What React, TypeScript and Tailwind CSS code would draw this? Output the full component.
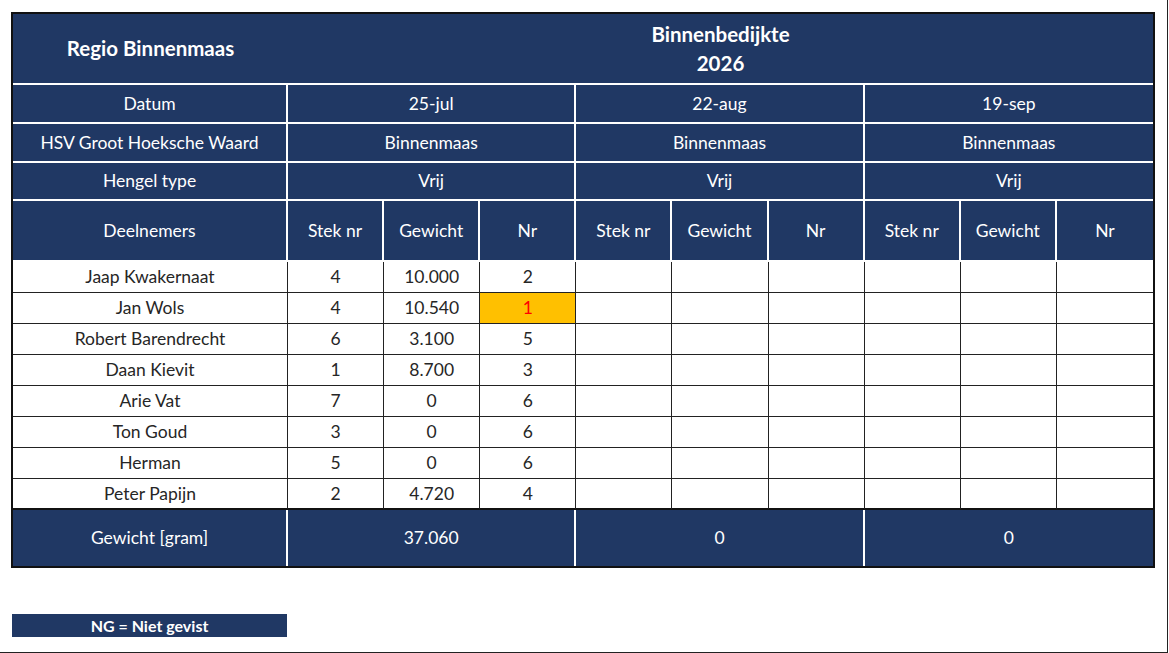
import React from 'react';

const NAVY = 'bg-[#203864]';

interface Row {
  name: string;
  stek: string;
  gewicht: string;
  nr: string;
  winner?: boolean;
}

const rows: Row[] = [
  { name: 'Jaap Kwakernaat', stek: '4', gewicht: '10.000', nr: '2' },
  { name: 'Jan Wols', stek: '4', gewicht: '10.540', nr: '1', winner: true },
  { name: 'Robert Barendrecht', stek: '6', gewicht: '3.100', nr: '5' },
  { name: 'Daan Kievit', stek: '1', gewicht: '8.700', nr: '3' },
  { name: 'Arie Vat', stek: '7', gewicht: '0', nr: '6' },
  { name: 'Ton Goud', stek: '3', gewicht: '0', nr: '6' },
  { name: 'Herman', stek: '5', gewicht: '0', nr: '6' },
  { name: 'Peter Papijn', stek: '2', gewicht: '4.720', nr: '4' },
];

const dates = ['25-jul', '22-aug', '19-sep'];
const totals = ['37.060', '0', '0'];

// header cell: navy with white grid lines
const hd = `${NAVY} text-white text-center align-middle border-b-2 border-white`;

export default function App() {
  return (
    <div
      className="relative w-[1168px] h-[653px] bg-white border-r border-b border-[#222]"
      style={{ fontFamily: 'Lato, "Open Sans", sans-serif' }}
    >
      <div className="pt-3 pl-[11px]">
        <div className="w-[1144px] border-2 border-[#111]">
          <table className="w-full table-fixed border-separate border-spacing-0 text-[17.5px] leading-tight">
            <colgroup>
              <col className="w-[275px]" />
              {Array.from({ length: 9 }, (_, i) => (
                <col key={i} />
              ))}
            </colgroup>
            <tbody>
              {/* Title */}
              <tr>
                <td className={`${hd} h-[71px] text-[20.5px] font-bold`}>Regio Binnenmaas</td>
                <td colSpan={9} className={`${hd} h-[71px] text-[20.5px] font-bold leading-[29px]`}>
                  Binnenbedijkte
                  <br />
                  2026
                </td>
              </tr>

              {/* Info rows */}
              {[
                { label: 'Datum', values: dates, h: 'h-[39px]' },
                { label: 'HSV Groot Hoeksche Waard', values: ['Binnenmaas', 'Binnenmaas', 'Binnenmaas'], h: 'h-[39px]' },
                { label: 'Hengel type', values: ['Vrij', 'Vrij', 'Vrij'], h: 'h-[38px]' },
              ].map((r) => (
                <tr key={r.label}>
                  <td className={`${hd} ${r.h} border-r-2`}>{r.label}</td>
                  {r.values.map((v, i) => (
                    <td key={i} colSpan={3} className={`${hd} ${r.h} ${i < 2 ? 'border-r-2' : ''}`}>
                      {v}
                    </td>
                  ))}
                </tr>
              ))}

              {/* Column headers */}
              <tr>
                <td className={`${hd} h-[61px] border-r-2`}>Deelnemers</td>
                {Array.from({ length: 9 }, (_, i) => (
                  <td key={i} className={`${hd} h-[61px] ${i < 8 ? 'border-r-2' : ''}`}>
                    {['Stek nr', 'Gewicht', 'Nr'][i % 3]}
                  </td>
                ))}
              </tr>

              {/* Participants */}
              {rows.map((r, ri) => {
                const last = ri === rows.length - 1;
                const cell = `h-[31px] text-center align-middle text-[#262626] border-r border-[#222] ${
                  last ? 'border-b-2 border-b-[#111]' : 'border-b'
                }`;
                return (
                  <tr key={r.name}>
                    <td className={cell}>{r.name}</td>
                    <td className={cell}>{r.stek}</td>
                    <td className={cell}>{r.gewicht}</td>
                    <td className={`${cell} ${r.winner ? 'bg-[#ffc000] text-[#ff0000]' : ''}`}>{r.nr}</td>
                    {Array.from({ length: 6 }, (_, i) => (
                      <td key={i} className={`${cell} ${i === 5 ? 'border-r-0' : ''}`} />
                    ))}
                  </tr>
                );
              })}

              {/* Totals */}
              <tr>
                <td className={`${NAVY} h-[56px] text-white text-center border-r-2 border-white`}>Gewicht [gram]</td>
                {totals.map((t, i) => (
                  <td
                    key={i}
                    colSpan={3}
                    className={`${NAVY} h-[56px] text-white text-center ${i < 2 ? 'border-r-2 border-white' : ''}`}
                  >
                    {t}
                  </td>
                ))}
              </tr>
            </tbody>
          </table>
        </div>

        <div className={`mt-[46px] ml-px w-[275px] h-[23px] ${NAVY} text-white text-[16px] font-bold flex items-center justify-center`}>
          NG = Niet gevist
        </div>
      </div>
    </div>
  );
}
